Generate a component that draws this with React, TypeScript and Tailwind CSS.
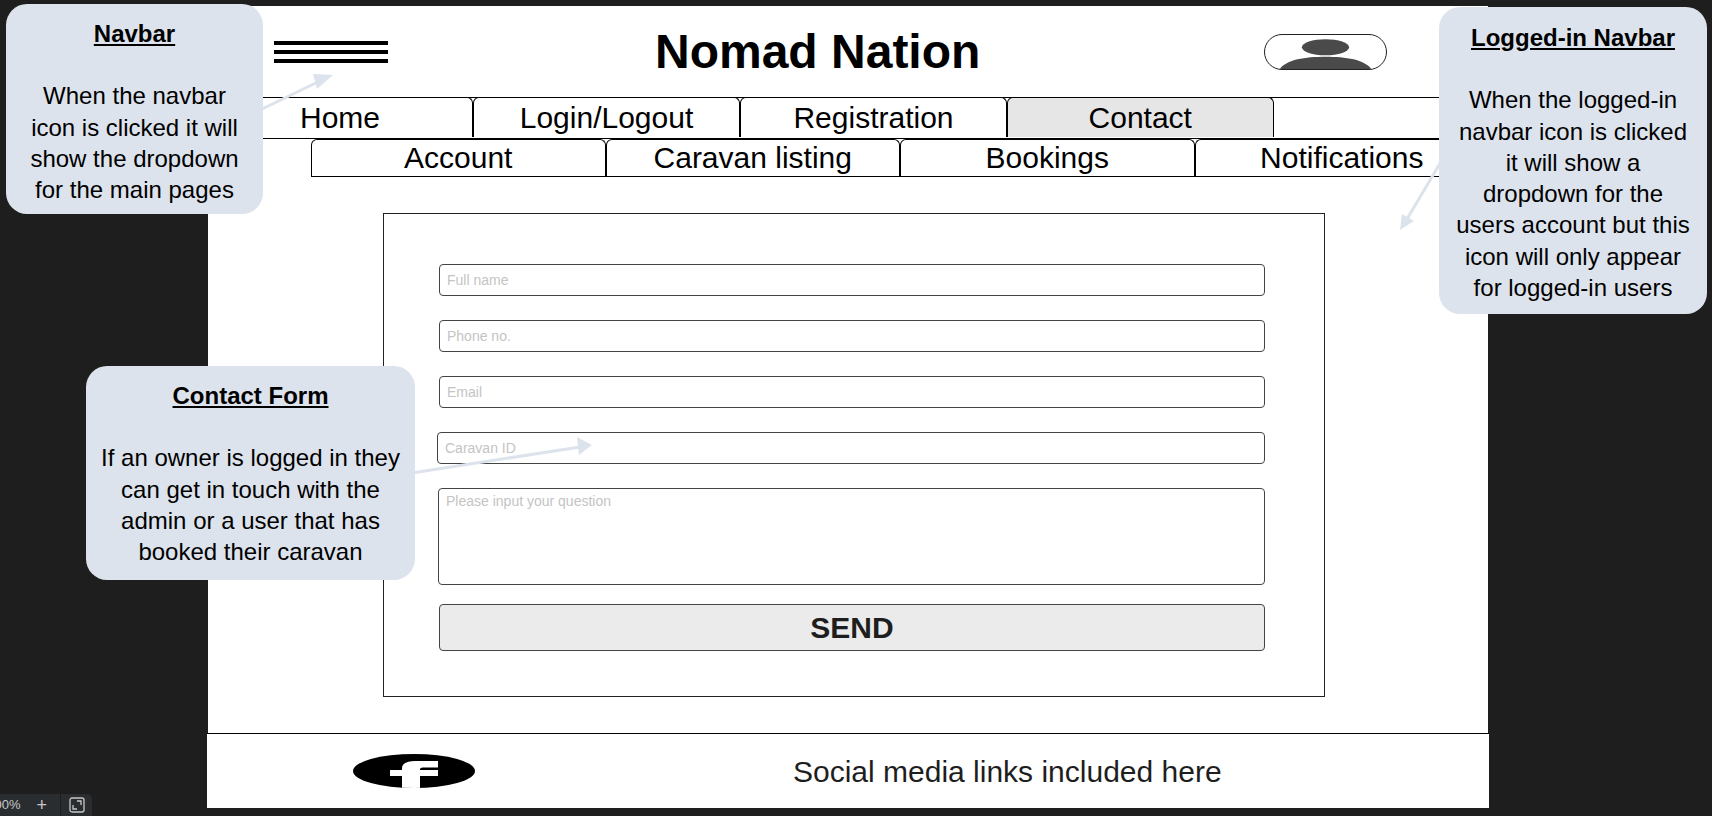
import React from "react";

const font = { fontFamily: '"Liberation Sans", Arial, sans-serif' };

function Callout({ className, title, lines }: { className: string; title: string; lines: string[] }) {
  return (
    <div className={"absolute z-20 rounded-[21px] bg-[#dde3ec] text-center text-[24px] leading-[31.3px] text-black " + className}>
      <div className="font-bold underline">{title}</div>
      <div className="h-[31px]" />
      {lines.map((l) => (
        <div key={l} className="whitespace-nowrap">{l}</div>
      ))}
    </div>
  );
}

function Tab({ label, active, w }: { label: string; active?: boolean; w: string }) {
  return (
    <div className={"flex h-full shrink-0 items-center justify-center rounded-t-[6px] border-x border-t border-black text-[30px] leading-none text-black " + w + (active ? " bg-[#e6e6e6]" : " bg-white")}>
      {label}
    </div>
  );
}

function Field({ ph, className = "ml-[55px] w-[826px]" }: { ph: string; className?: string }) {
  return (
    <div className={"flex h-[32px] items-center rounded-[4px] border border-[#444] pl-[7px] text-[14px] text-[#c4c4c4] " + className}>
      {ph}
    </div>
  );
}

export default function App() {
  return (
    <div className="relative h-[816px] w-[1712px] overflow-hidden bg-[#1e1e1e]" style={font}>
      <div className="ml-[207px] w-[1282px] pt-[6px]">
        <div className="ml-px mr-px flex h-[727px] flex-col bg-white">
          {/* header */}
          <div className="flex h-[91px] items-center pl-[66px] pr-[101px]">
            <div className="flex w-[114px] flex-col gap-[5px]">
              <div className="h-[4px] bg-black" />
              <div className="h-[4px] bg-black" />
              <div className="h-[4px] bg-black" />
            </div>
            <div className="ml-[267px] text-[48px] font-bold leading-none text-black">Nomad Nation</div>
            <div className="relative ml-auto mt-[1px] h-[36px] w-[123px] overflow-hidden rounded-[18px] border border-[#222] bg-white">
              <svg viewBox="0 0 123 36" className="absolute inset-0 h-full w-full">
                <ellipse cx="61.5" cy="13" rx="25" ry="8.5" fill="#4a4a4a" />
                <path d="M13 36 C20 26 40 23 61.5 23 C83 23 103 26 110 36 Z" fill="#4a4a4a" />
              </svg>
            </div>
          </div>
          {/* nav 1 */}
          <div className="flex h-[42px] border-b border-t border-black">
            <Tab label="Home" w="w-[265px] -mt-px border-l-0 pt-[1px]" />
            <Tab label="Login/Logout" w="w-[267px] -mt-px pt-[1px]" />
            <Tab label="Registration" w="w-[267px] -mt-px pt-[1px]" />
            <Tab label="Contact" active w="w-[266.5px] -mt-px pt-[1px]" />
          </div>
          {/* nav 2 */}
          <div className="ml-[103px] flex h-[38px] border-b border-black">
            <Tab label="Account" w="w-[294.5px]" />
            <Tab label="Caravan listing" w="w-[294.5px]" />
            <Tab label="Bookings" w="w-[294.5px]" />
            <Tab label="Notifications" w="w-[293.5px] border-r-0" />
          </div>
          {/* form */}
          <div className="ml-[175px] mt-[36px] flex h-[484px] w-[942px] flex-col border border-[#222]">
            <div className="h-[50px]" />
            <Field ph="Full name" />
            <Field ph="Phone no." className="ml-[55px] mt-[24px] w-[826px]" />
            <Field ph="Email" className="ml-[55px] mt-[24px] w-[826px]" />
            <Field ph="Caravan ID" className="ml-[53px] mt-[24px] w-[828px]" />
            <div className="ml-[54px] mt-[24px] h-[97px] w-[827px] rounded-[4px] border border-[#444] pl-[7px] pt-[4px] text-[14px] leading-[16px] text-[#c4c4c4]">
              Please input your question
            </div>
            <div className="ml-[55px] mt-[19px] flex h-[47px] w-[826px] items-center justify-center rounded-[4px] border border-[#444] bg-[#ebebeb] pb-[1px] text-[30px] font-bold text-[#1e1e1e]">
              SEND
            </div>
          </div>
        </div>
        {/* footer */}
        <div className="flex h-[75px] items-center border-t border-black bg-white">
          <svg viewBox="0 0 122 34" className="ml-[146px] h-[34px] w-[122px]">
            <defs>
              <clipPath id="fbclip">
                <ellipse cx="61" cy="17" rx="61" ry="17" />
              </clipPath>
            </defs>
            <ellipse cx="61" cy="17" rx="61" ry="17" fill="#000" />
            <g clipPath="url(#fbclip)">
              <path d="M37 16 H49 V14 C49 9 55 7 62 7 H85 V13.5 H72 C68 13.5 67 14 67 16 H85 V22 H67 V34 H49 V22 H37 Z" fill="#fff" />
            </g>
          </svg>
          <div className="ml-[318px] mt-[2px] text-[30px] leading-none text-[#1e1e1e]">Social media links included here</div>
        </div>
      </div>

      {/* arrows over content */}
      <svg className="pointer-events-none absolute left-0 top-0 z-10 h-[816px] w-[1712px]" viewBox="0 0 1712 816">
        <g stroke="#dde3ec" strokeWidth="3" fill="#dde3ec">
          <line x1="260" y1="110" x2="322" y2="80" />
          <path d="M333 75 L317 89 L313 74 Z" stroke="none" />
          <line x1="1442" y1="160" x2="1407" y2="219" />
          <path d="M1400 230 L1402 214 L1414 221 Z" stroke="none" />
          <line x1="412" y1="473" x2="580" y2="447" />
          <path d="M592 445 L577 437 L579 455 Z" stroke="none" />
        </g>
      </svg>

      <Callout
        className="left-[6px] top-[4px] h-[210px] w-[257px] pt-[14px]"
        title="Navbar"
        lines={["When the navbar", "icon is clicked it will", "show the dropdown", "for the main pages"]}
      />
      <Callout
        className="left-[1439px] top-[7px] h-[307px] w-[268px] pt-[15px]"
        title="Logged-in Navbar"
        lines={["When the logged-in", "navbar icon is clicked", "it will show a", "dropdown for the", "users account but this", "icon will only appear", "for logged-in users"]}
      />
      <Callout
        className="left-[86px] top-[366px] h-[214px] w-[329px] pt-[14px]"
        title="Contact Form"
        lines={["If an owner is logged in they", "can get in touch with the", "admin or a user that has", "booked their caravan"]}
      />

      {/* canvas zoom control at the corner */}
      <div className="absolute bottom-0 left-0 z-20 flex h-[22px] w-[92px] items-center justify-end rounded-tr-[5px] bg-[#2a2d30] text-[13px] text-[#c8c8c8]">
        <span className="mr-[16px] whitespace-nowrap">00%</span>
        <span className="mr-[13px] text-[18px] leading-none">+</span>
        <div className="flex h-full w-[32px] shrink-0 items-center justify-center border-l border-[#1e1e1e]">
          <svg viewBox="0 0 16 16" className="h-[16px] w-[16px]" fill="none" stroke="#c8c8c8" strokeWidth="1.3">
            <rect x="1" y="1" width="14" height="14" rx="2" />
            <path d="M4 8 V12 H8 M8 4 H12 V8" />
          </svg>
        </div>
      </div>
    </div>
  );
}
